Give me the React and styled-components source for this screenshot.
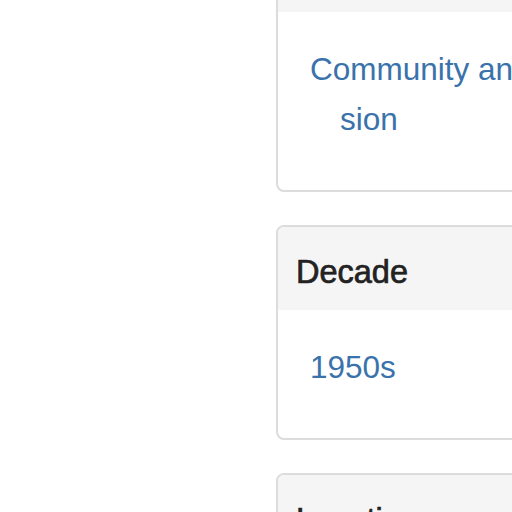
import React from "react";
import styled, { createGlobalStyle } from "styled-components";

const Global = createGlobalStyle`
  html, body {
    margin: 0;
    padding: 0;
    overflow: hidden;
    background: #fff;
  }
  body {
    font-family: "Liberation Sans", Arial, Helvetica, sans-serif;
  }
`;

const Layout = styled.div`
  display: grid;
  grid-template-columns: 276px 420px;
  width: 696px;
`;

const Sidebar = styled.aside``;

const Column = styled.main`
  margin-top: -73px;
  display: flex;
  flex-direction: column;
  gap: 33px;
`;

const Panel = styled.section`
  border: 2px solid #dcdcdc;
  border-radius: 8px;
  background: #fff;
  overflow: hidden;
`;

const Heading = styled.div`
  background: #f5f5f5;
  padding: 27px 18px 20px;
`;

const Title = styled.h3`
  margin: 0;
  font-size: 32.5px;
  line-height: 36px;
  font-weight: 400;
  color: #222;
  -webkit-text-stroke: 0.7px #222;
`;

const Body = styled.div`
  padding: 32px 32px 46px;
`;

const List = styled.ul`
  margin: 0;
  padding: 0;
  list-style: none;
`;

const Item = styled.li`
  padding-left: 30px;
  text-indent: -30px;
  font-size: 31.5px;
  line-height: 50px;
`;

const Link = styled.a`
  color: #3a72ab;
  text-decoration: none;
`;

const panels = [
  { title: "Subject", items: ["Community and Expres\u00ADsion"] },
  { title: "Decade", items: ["1950s"] },
  { title: "Location", items: ["Cleveland"] },
];

export default function App() {
  return (
    <>
      <Global />
      <Layout>
        <Sidebar />
        <Column>
          {panels.map((p) => (
            <Panel key={p.title}>
              <Heading>
                <Title>{p.title}</Title>
              </Heading>
              <Body>
                <List>
                  {p.items.map((it) => (
                    <Item key={it}>
                      <Link href="#">{it}</Link>
                    </Item>
                  ))}
                </List>
              </Body>
            </Panel>
          ))}
        </Column>
      </Layout>
    </>
  );
}
